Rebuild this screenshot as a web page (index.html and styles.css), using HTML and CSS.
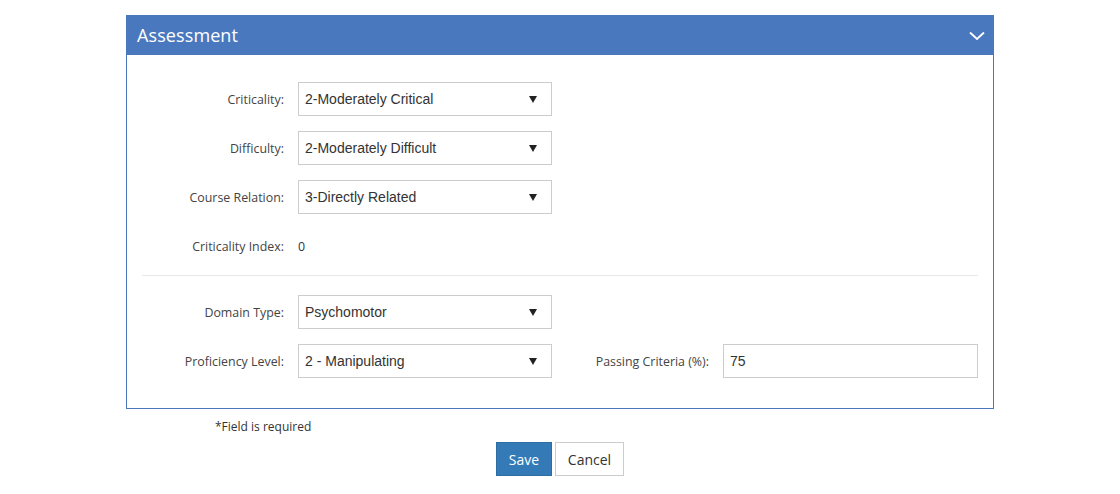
FILE: index.html
```html
<!DOCTYPE html>
<html>
<head>
<meta charset="utf-8">
<link rel="stylesheet" href="styles.css">
</head>
<body>
<div class="page">
  <section class="panel">
    <header class="panel-head">
      <h2 class="panel-title">Assessment</h2>
      <svg class="chev" width="16" height="10" viewBox="0 0 16 10"><polyline points="1,1.5 8,8 15,1.5" fill="none" stroke="#fff" stroke-width="1.8"/></svg>
    </header>
    <div class="panel-body">
      <div class="row">
        <label class="lbl">Criticality:</label>
        <div class="sel"><span>2-Moderately Critical</span><i class="caret"></i></div>
      </div>
      <div class="row">
        <label class="lbl">Difficulty:</label>
        <div class="sel"><span>2-Moderately Difficult</span><i class="caret"></i></div>
      </div>
      <div class="row">
        <label class="lbl">Course Relation:</label>
        <div class="sel"><span>3-Directly Related</span><i class="caret"></i></div>
      </div>
      <div class="row">
        <label class="lbl">Criticality Index:</label>
        <div class="val">0</div>
      </div>
      <hr class="divider">
      <div class="row">
        <label class="lbl">Domain Type:</label>
        <div class="sel"><span>Psychomotor</span><i class="caret"></i></div>
      </div>
      <div class="row">
        <label class="lbl">Proficiency Level:</label>
        <div class="sel"><span>2 - Manipulating</span><i class="caret"></i></div>
        <label class="lbl lbl2">Passing Criteria (%):</label>
        <div class="inp">75</div>
      </div>
    </div>
  </section>
  <p class="req">*Field is required</p>
  <div class="actions">
    <button class="btn btn-primary">Save</button>
    <button class="btn btn-default">Cancel</button>
  </div>
</div>
</body>
</html>
```

FILE: styles.css
```css
html, body { margin: 0; padding: 0; background: #fff; }
body { font-family: "Open Sans", "Segoe UI", sans-serif; color: #333; }
.page { padding: 15px 0 0 126px; width: 868px; }
.panel { border: 1px solid #4a77be; border-top: 0; box-sizing: border-box; width: 868px; }
.panel-head {
  background: #4a78bf; height: 40px; margin: 0 -1px;
  display: flex; align-items: center; justify-content: space-between;
  padding: 0 9px 0 11px;
}
.panel-title { margin: 0; font-weight: 400; font-size: 18px; color: #fff; letter-spacing: 0.1px; }
.chev { display: block; margin-top: 1px; }
.panel-body { padding: 27px 15px 30px 15px; }
.row { display: flex; align-items: center; height: 34px; margin-bottom: 15px; }
.row:last-child { margin-bottom: 0; }
.lbl { width: 142px; text-align: right; font-size: 12.4px; color: #444; margin-right: 14px; flex: none; }
.lbl2 { width: 157px; }
.sel, .inp {
  box-sizing: border-box; width: 254px; height: 34px; border: 1px solid #ccc;
  display: flex; align-items: center; justify-content: space-between;
  padding: 0 14px 0 6px; font-family: "Liberation Sans", Arial, sans-serif; font-size: 14px; color: #333; flex: none;
}
.inp { width: 255px; }
.caret { width: 0; height: 0; border-left: 4px solid transparent; border-right: 4px solid transparent; border-top: 7px solid #222; }
.val { font-size: 12.4px; color: #2d3348; }
.divider { border: 0; border-top: 1px solid #e8e8e8; margin: -3px 0 19px 0; }
.req { margin: 10px 0 0 89px; font-size: 12px; color: #333; line-height: 16px; }
.actions { display: flex; justify-content: center; gap: 3px; margin-top: 7px; }
.btn { font-family: "Open Sans", "Segoe UI", sans-serif; font-size: 14px; height: 34px; padding: 0 12px; border: 1px solid; border-radius: 0; cursor: pointer; }
.btn-primary { background: #337ab7; border-color: #2e6da4; color: #fff; width: 56px; padding: 0; }
.btn-default { background: #fff; border-color: #ccc; color: #333; width: 69px; padding: 0; }
```
